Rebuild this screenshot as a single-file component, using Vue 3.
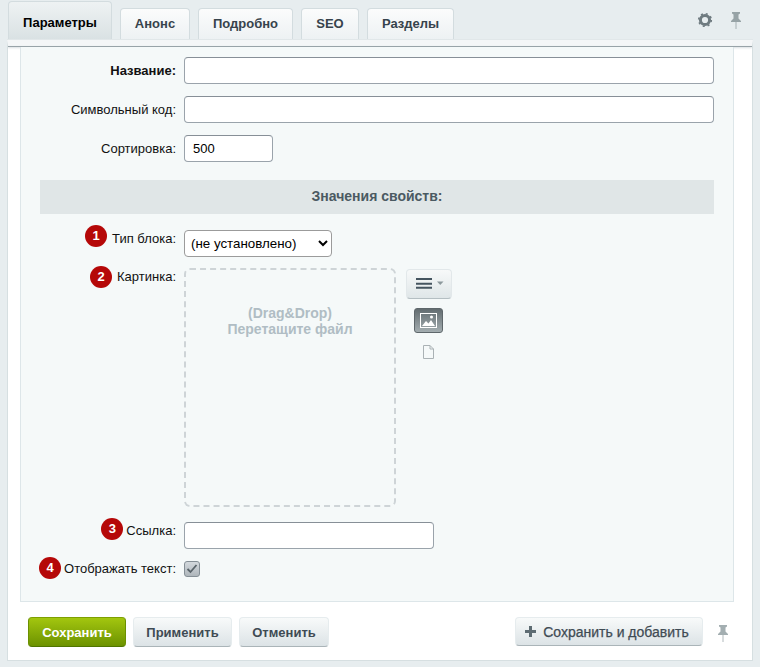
<script setup>
const tabs = ['Параметры', 'Анонс', 'Подробно', 'SEO', 'Разделы']
</script>

<template>
  <div class="page">
    <div class="tabs">
      <div v-for="(t, i) in tabs" :key="t" class="tab" :class="{ active: i === 0 }">{{ t }}</div>
      <div class="tools">
        <svg width="16" height="16" viewBox="0 0 16 16">
          <circle cx="8" cy="8" r="4.6" fill="none" stroke="#6f7b80" stroke-width="3" />
          <circle cx="8" cy="8" r="6.3" fill="none" stroke="#6f7b80" stroke-width="1.6" stroke-dasharray="2 2.95" />
        </svg>
        <svg class="pin" width="12" height="18" viewBox="0 0 12 18">
          <path d="M2 1h8v1.500L8.500 3.500v4L11 10v1H1v-1l2.500-2.500v-4L2 2.500z" fill="#97a3a6" />
          <path d="M6 11v7" stroke="#a6b0b3" stroke-width="1" />
        </svg>
      </div>
    </div>
    <div class="sheet">
      <div class="inner">
        <div class="row first">
          <div class="label strong">Название:</div>
          <input class="inp wide" type="text" />
        </div>
        <div class="row">
          <div class="label">Символьный код:</div>
          <input class="inp wide" type="text" />
        </div>
        <div class="row">
          <div class="label">Сортировка:</div>
          <input class="inp short" type="text" value="500" />
        </div>
        <div class="band">Значения свойств:</div>
        <div class="row select-row">
          <div class="label with-badge"><span class="badge">1</span><span>Тип блока:</span></div>
          <select class="sel"><option>(не установлено)</option></select>
        </div>
        <div class="row picture-row">
          <div class="label with-badge pic-label"><span class="badge">2</span><span>Картинка:</span></div>
          <div class="drop">
            <span class="drag">(Drag&amp;Drop)</span>
            <span>Перетащите файл</span>
          </div>
          <div class="view">
            <div class="menu-btn">
              <svg width="34" height="14" viewBox="0 0 34 14">
                <path d="M0 2h16M0 6.700h16M0 10.700h16" stroke="#44545f" stroke-width="2" />
                <path d="M21 4.500h6.500l-3.250 3.500z" fill="#8c989c" />
              </svg>
            </div>
            <div class="img-btn">
              <svg width="17" height="15" viewBox="0 0 17 15">
                <rect x=".5" y=".5" width="16" height="14" fill="none" stroke="#fff" />
                <path d="M2 13l4-5 2.500 2.500L11 7l4 6z" fill="#fff" />
                <circle cx="11.500" cy="4" r="1.500" fill="#fff" />
              </svg>
            </div>
            <svg class="file" width="11" height="14" viewBox="0 0 11 14">
              <path d="M.5.500h6.500l3.500 3.500v9.500h-10zM7 .500v3.500h3.500" fill="none" stroke="#aab2b5" />
            </svg>
          </div>
        </div>
        <div class="row link-row">
          <div class="label with-badge"><span class="badge">3</span><span>Ссылка:</span></div>
          <input class="inp link" type="text" />
        </div>
        <div class="row check-row">
          <div class="label with-badge"><span class="badge">4</span><span>Отображать текст:</span></div>
          <div class="check">
            <svg width="12" height="10" viewBox="0 0 12 10">
              <path d="M1.500 5l3 3 6-7" fill="none" stroke="#59646a" stroke-width="1.800" />
            </svg>
          </div>
        </div>
      </div>
      <div class="footer">
        <button class="btn save">Сохранить</button>
        <button class="btn apply">Применить</button>
        <button class="btn cancel">Отменить</button>
        <button class="btn add">
          <svg width="11" height="11" viewBox="0 0 11 11"><path d="M5.500 0v11M0 5.500h11" stroke="#5d6b72" stroke-width="3" /></svg>
          Сохранить и добавить
        </button>
        <svg class="pin foot-pin" width="12" height="18" viewBox="0 0 12 18">
          <path d="M2 1h8v1.500L8.500 3.500v4L11 10v1H1v-1l2.500-2.500v-4L2 2.500z" fill="#a3aeb1" />
          <path d="M6 11v7" stroke="#b0b9bc" stroke-width="1" />
        </svg>
      </div>
    </div>
  </div>
</template>

<style>
html, body { margin: 0; background: #e7edef; }
</style>

<style scoped>
.page {
  width: 760px;
  height: 667px;
  box-sizing: border-box;
  padding: 1px 7px 0;
  overflow: hidden;
  font-family: "Liberation Sans", Arial, sans-serif;
  font-size: 13px;
  color: #000;
  background: #e7edef;
}
.tabs {
  height: 39px;
  display: flex;
  align-items: flex-end;
  gap: 8px;
  padding-left: 1px;
}
.tab {
  flex: none;
  height: 32px;
  box-sizing: border-box;
  padding: 7px 0 0;
  border: 1px solid #d3dcdf;
  border-bottom: 0;
  border-radius: 4px 4px 0 0;
  background: linear-gradient(#fbfcfc, #edf1f3);
  color: #37434c;
  font-weight: bold;
  font-size: 13px;
  line-height: 16px;
  text-align: center;
}
.tab:nth-child(2) { width: 70px; }
.tab:nth-child(3) { width: 95px; }
.tab:nth-child(4) { width: 58px; }
.tab:nth-child(5) { width: 87px; }
.tab.active {
  width: 104px;
  height: 39px;
  padding-top: 13px;
  color: #000;
  background: linear-gradient(#eef2f3, #d9e1e3);
}
.tools {
  margin-left: auto;
  display: flex;
  align-items: center;
  gap: 17px;
  height: 38px;
  padding-right: 11px;
  align-self: flex-start;
}
.pin { display: block; }
.sheet {
  width: 746px;
  height: 621px;
  box-sizing: border-box;
  background: #fff;
  border: solid #d6dfe1;
  border-width: 0 1px 1px;
  border-top: 6px solid #f4f6f7;
  box-shadow: 0 -1px 0 #e1e7e9;
  position: relative;
}
.sheet::before {
  content: "";
  display: block;
  height: 1px;
  background: #98a3a8;
  box-shadow: 0 1px 2px #c9d1d4;
}
.inner {
  margin-left: 12px;
  width: 714px;
  height: 555px;
  box-sizing: border-box;
  padding: 10px 19px 0;
  background: #f5f9f9;
  border: solid #dde6e9;
  border-width: 0 1px 1px;
}
.row {
  display: flex;
  align-items: flex-start;
  gap: 8px;
  margin-bottom: 12px;
}
.label {
  width: 136px;
  flex: none;
  display: flex;
  justify-content: flex-end;
  padding-top: 6px;
  line-height: 15px;
  white-space: nowrap;
  color: #111;
}
.strong { font-weight: bold; }
.inp {
  display: block;
  height: 27px;
  box-sizing: border-box;
  margin: 0;
  padding: 0 8px;
  border: 1px solid #9aa3ab;
  border-top-color: #878f97;
  border-radius: 4px;
  background: #fff;
  font: 13px "Liberation Sans", Arial, sans-serif;
  color: #000;
  outline: none;
}
.wide { width: 530px; }
.short { width: 89px; }
.link { width: 250px; }
.band {
  height: 34px;
  margin-top: 18px;
  margin-bottom: 16px;
  background: #e0e6e7;
  color: #4b5a62;
  font-weight: bold;
  font-size: 14px;
  line-height: 33px;
  text-align: center;
}
.with-badge { gap: 5px; padding-top: 1px; }
.badge {
  flex: none;
  width: 22px;
  height: 22px;
  margin-top: -6px;
  border-radius: 50%;
  background: #b50808;
  color: #fff;
  font-weight: bold;
  font-size: 13px;
  line-height: 21px;
  text-align: center;
}
.select-row { margin-bottom: 11px; }
.sel {
  width: 148px;
  height: 27px;
  box-sizing: border-box;
  border: 1px solid #9b9b9b;
  border-radius: 4px;
  background: #fff;
  padding-left: 2px;
  font: 13.33px "Liberation Sans", Arial, sans-serif;
  color: #000;
  outline: none;
}
.picture-row { margin-bottom: 15px; }
.pic-label { padding-top: 1px; }
.pic-label .badge { margin-top: -3px; }
.drop {
  width: 212px;
  height: 239px;
  box-sizing: border-box;
  border: 2px dashed #ced4d7;
  border-radius: 6px;
  padding-top: 35px;
  display: flex;
  flex-direction: column;
  align-items: center;
  color: #b0bdc4;
  font-weight: bold;
  font-size: 14px;
  line-height: 16px;
}
.view {
  margin-left: 2px;
  width: 46px;
  display: flex;
  flex-direction: column;
  align-items: center;
}
.menu-btn {
  width: 46px;
  height: 30px;
  margin-top: 1px;
  box-sizing: border-box;
  border: 1px solid #e2e8ea;
  border-bottom-color: #b4bec2;
  border-radius: 4px;
  background: linear-gradient(#f7f9f9, #dfe6e8);
  display: flex;
  align-items: center;
  justify-content: center;
  padding-left: 8px;
}
.img-btn {
  width: 29px;
  height: 25px;
  margin: 9px 1px 0 0;
  box-sizing: border-box;
  border-radius: 3px;
  border: 1px solid #5e676b;
  background: linear-gradient(#626c70, #a3adb0);
  display: flex;
  align-items: center;
  justify-content: center;
}
.file { margin: 12px 1px 0 0; }
.link-row { margin-bottom: 12px; }
.check-row { margin-bottom: 0; }
.check-row .label { padding-top: 0; }
.link-row .label, .check-row .label { gap: 3px; }
.link-row .badge { margin-top: -5px; }
.check-row .badge { margin-top: -4px; }
.check {
  width: 16px;
  height: 16px;
  box-sizing: border-box;
  border: 1px solid #858f96;
  border-radius: 3px;
  background: linear-gradient(#d3d9dd, #aeb6bb);
  display: flex;
  align-items: center;
  justify-content: center;
}
.footer {
  position: relative;
  display: flex;
  gap: 7px;
  padding: 15px 0 0 20px;
}
.btn {
  height: 30px;
  box-sizing: border-box;
  margin: 0;
  padding: 0;
  border: 1px solid #e6ecee;
  border-bottom-color: #aab4b8;
  border-radius: 4px;
  background: linear-gradient(#f8fafa, #dce3e6);
  color: #3f4b54;
  font: bold 13px "Liberation Sans", Arial, sans-serif;
  display: flex;
  align-items: center;
  justify-content: center;
  gap: 7px;
}
.save {
  width: 98px;
  border-color: #7ea000 #6b9000 #4f7500;
  background: linear-gradient(#a3c60f, #6c9200);
  color: #fff;
}
.apply { width: 99px; }
.cancel { width: 90px; }
.add {
  width: 188px;
  margin-left: 179px;
  height: 29px;
  padding-right: 4px;
  font-weight: normal;
  font-size: 14px;
  -webkit-text-stroke: .25px #3f4b54;
}
.foot-pin { margin: 7px 0 0 7px; }
</style>
